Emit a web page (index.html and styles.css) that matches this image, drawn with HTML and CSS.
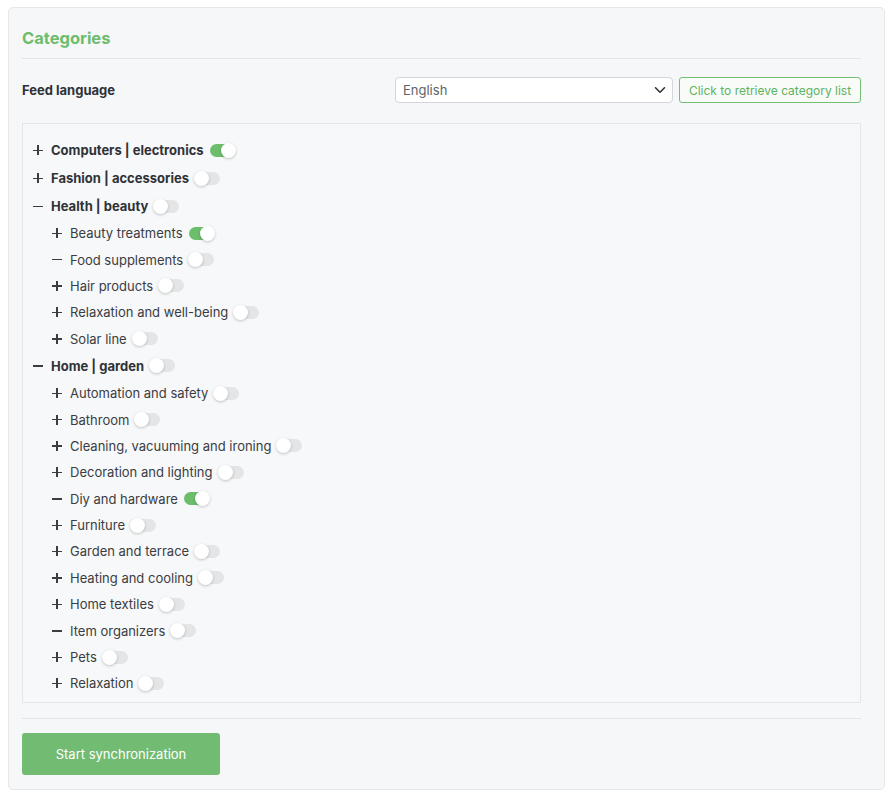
FILE: index.html
```html
<!DOCTYPE html>
<html lang="en">
<head>
<meta charset="utf-8">
<title>Categories</title>
<link rel="stylesheet" href="styles.css">
</head>
<body>
<div class="card">
  <h2 class="title">Categories</h2>
  <div class="rule"></div>
  <div class="lang-row">
    <span class="lang-label">Feed language</span>
    <div class="lang-controls">
      <div class="select">
        <span>English</span>
        <svg width="12" height="8" viewBox="0 0 12 8"><path d="M1.5 1.8 L6 6.2 L10.5 1.8" fill="none" stroke="#333" stroke-width="1.6" stroke-linecap="round" stroke-linejoin="round"/></svg>
      </div>
      <button class="btn-outline">Click to retrieve category list</button>
    </div>
  </div>
  <div class="tree">
    <div class="row top"><span class="ico plus"></span><span class="lbl">Computers | electronics</span><span class="tg on"></span></div>
    <div class="row top"><span class="ico plus"></span><span class="lbl">Fashion | accessories</span><span class="tg"></span></div>
    <div class="row top"><span class="ico minus"></span><span class="lbl">Health | beauty</span><span class="tg"></span></div>
    <div class="row sub"><span class="ico plus"></span><span class="lbl">Beauty treatments</span><span class="tg on"></span></div>
    <div class="row sub"><span class="ico minus"></span><span class="lbl">Food supplements</span><span class="tg"></span></div>
    <div class="row sub"><span class="ico plus"></span><span class="lbl">Hair products</span><span class="tg"></span></div>
    <div class="row sub"><span class="ico plus"></span><span class="lbl">Relaxation and well-being</span><span class="tg"></span></div>
    <div class="row sub"><span class="ico plus"></span><span class="lbl">Solar line</span><span class="tg"></span></div>
    <div class="row top"><span class="ico minus"></span><span class="lbl">Home | garden</span><span class="tg"></span></div>
    <div class="row sub"><span class="ico plus"></span><span class="lbl">Automation and safety</span><span class="tg"></span></div>
    <div class="row sub"><span class="ico plus"></span><span class="lbl">Bathroom</span><span class="tg"></span></div>
    <div class="row sub"><span class="ico plus"></span><span class="lbl">Cleaning, vacuuming and ironing</span><span class="tg"></span></div>
    <div class="row sub"><span class="ico plus"></span><span class="lbl">Decoration and lighting</span><span class="tg"></span></div>
    <div class="row sub"><span class="ico minus"></span><span class="lbl">Diy and hardware</span><span class="tg on"></span></div>
    <div class="row sub"><span class="ico plus"></span><span class="lbl">Furniture</span><span class="tg"></span></div>
    <div class="row sub"><span class="ico plus"></span><span class="lbl">Garden and terrace</span><span class="tg"></span></div>
    <div class="row sub"><span class="ico plus"></span><span class="lbl">Heating and cooling</span><span class="tg"></span></div>
    <div class="row sub"><span class="ico plus"></span><span class="lbl">Home textiles</span><span class="tg"></span></div>
    <div class="row sub"><span class="ico minus"></span><span class="lbl">Item organizers</span><span class="tg"></span></div>
    <div class="row sub"><span class="ico plus"></span><span class="lbl">Pets</span><span class="tg"></span></div>
    <div class="row sub"><span class="ico plus"></span><span class="lbl">Relaxation</span><span class="tg"></span></div>
  </div>
  <div class="rule bottom"></div>
  <button class="btn-primary">Start synchronization</button>
</div>
</body>
</html>
```
FILE: styles.css
```css
* { box-sizing: border-box; }
body {
  margin: 0;
  background: #ffffff;
  font-family: Inter, "Noto Sans", "Liberation Sans", sans-serif;
  color: #3a3d41;
}
.card {
  margin: 7px 0 0 8px;
  width: 877px;
  height: 783px;
  background: #f6f7f8;
  border: 1px solid #e6e7e9;
  border-radius: 5px;
  padding: 19px 23px 14px 13px;
}
.title {
  margin: 0;
  font-size: 16.5px;
  line-height: 22px;
  font-weight: 700;
  color: #6dbd6d;
}
.rule {
  height: 1px;
  background: #e3e5e8;
  margin-top: 9px;
}
.lang-row {
  margin-top: 18px;
  display: flex;
  align-items: center;
  justify-content: space-between;
  height: 26px;
}
.lang-label {
  font-size: 13px;
  font-weight: 700;
  color: #2f3237;
}
.lang-controls {
  display: flex;
  gap: 6px;
  height: 26px;
}
.select {
  width: 278px;
  height: 26px;
  background: #fff;
  border: 1px solid #d3d6da;
  border-radius: 4px;
  display: flex;
  align-items: center;
  justify-content: space-between;
  padding: 0 6px 0 7px;
  font-size: 13px;
  color: #60646a;
}
.btn-outline {
  height: 26px;
  width: 182px;
  border: 1px solid #74bf74;
  border-radius: 3px;
  background: #f8fbf8;
  color: #5fb35f;
  font-family: inherit;
  font-size: 12px;
  padding: 0;
}
.tree {
  margin-top: 20px;
  height: 580px;
  border: 1px solid #e4e6e9;
  background: #f7f8f9;
  padding: 12px 0 0 10px;
  overflow: hidden;
}
.row {
  display: flex;
  align-items: center;
  font-size: 13px;
}
.row.top { height: 28px; font-weight: 700; color: #2f3237; }
.row.sub { height: 26.4px; padding-left: 19px; color: #3a3d41; }
.ico {
  width: 18px;
  height: 12px;
  position: relative;
  flex: none;
}
.ico::before, .plus::after {
  content: "";
  position: absolute;
  background: #3a3d41;
}
.ico::before { left: 0; top: 5.5px; width: 10px; height: 1.4px; }
.plus::after { left: 4.3px; top: 1px; width: 1.4px; height: 10px; }
.tg {
  position: relative;
  width: 25px;
  height: 13px;
  margin-left: 6px;
  border-radius: 7px;
  background: #e4e5e7;
  flex: none;
}
.tg::after {
  content: "";
  position: absolute;
  left: -1px;
  top: -1px;
  width: 15px;
  height: 15px;
  border-radius: 50%;
  background: #fff;
  box-shadow: 0 1px 3px rgba(0,0,0,0.22);
}
.tg.on { background: #6cbd6c; }
.tg.on::after { left: 11px; }
.rule.bottom { margin-top: 15px; }
.btn-primary {
  margin-top: 14px;
  width: 198px;
  height: 42px;
  border: none;
  border-radius: 3px;
  background: #72bb72;
  color: #fff;
  font-family: inherit;
  font-size: 13px;
}
```
